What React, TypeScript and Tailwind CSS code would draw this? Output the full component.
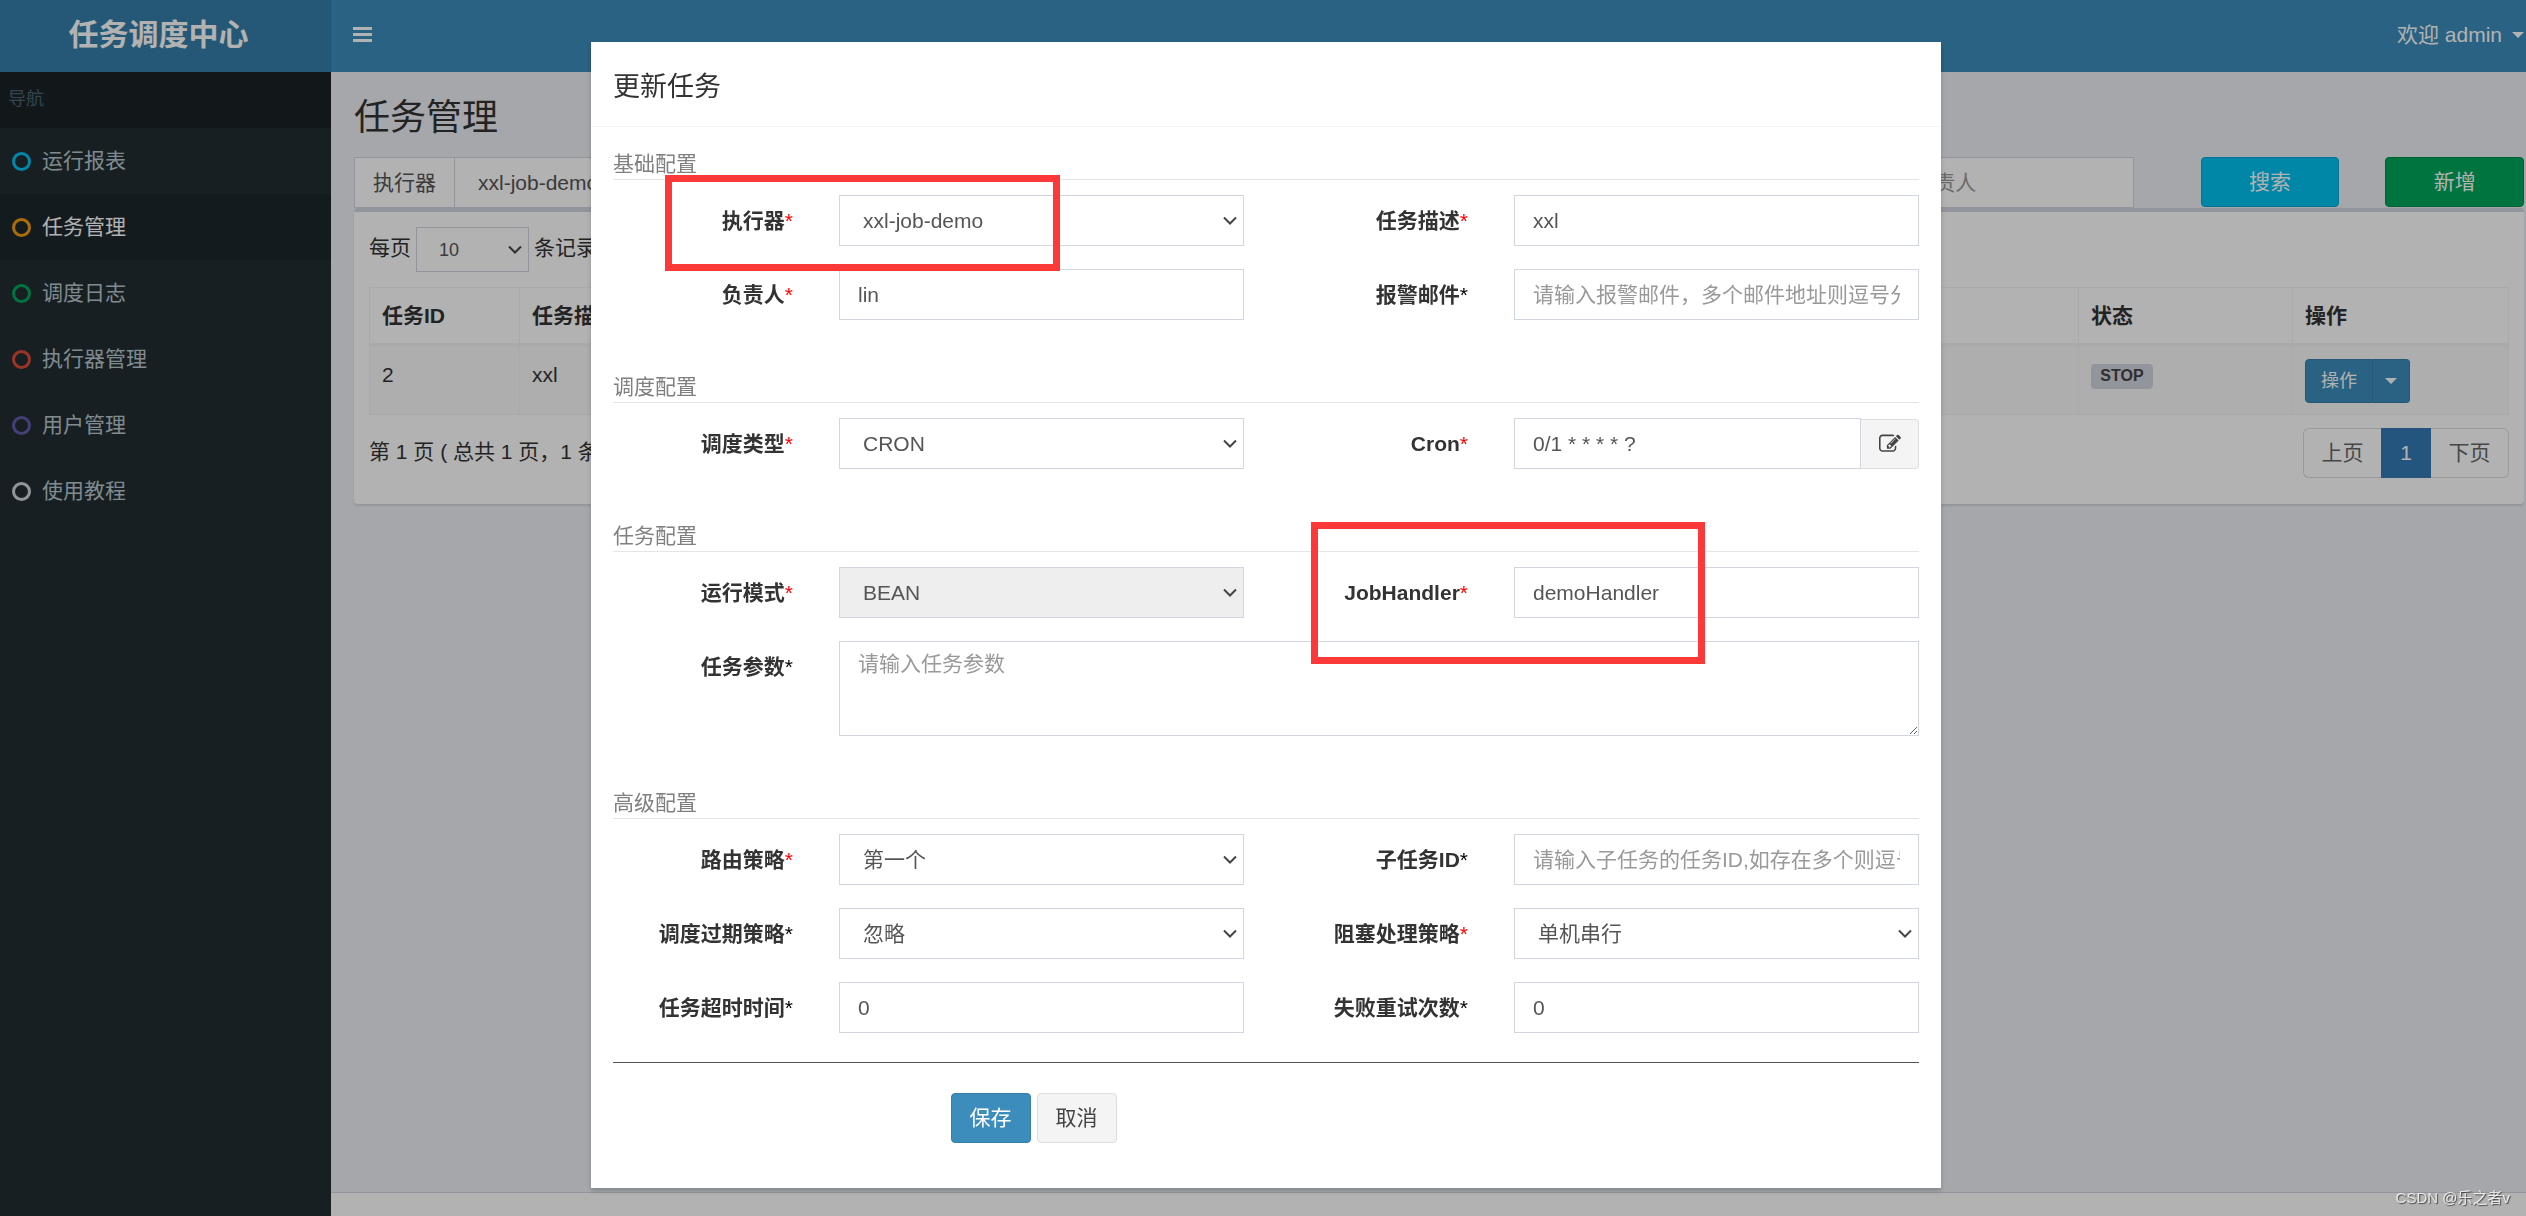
import type { ReactNode } from 'react'

const inputClass =
  'block w-full h-[51px] px-[18px] border border-[#d2d6de] bg-white text-[21px] text-[#555] placeholder-[#999] outline-none'

const menu = [
  { name: '运行报表', ring: 'border-[#00c0ef]' },
  { name: '任务管理', ring: 'border-[#f39c12]', active: true },
  { name: '调度日志', ring: 'border-[#00a65a]' },
  { name: '执行器管理', ring: 'border-[#dd4b39]' },
  { name: '用户管理', ring: 'border-[#605ca8]' },
  { name: '使用教程', ring: 'border-[#d2d6de]' },
]

function Chevron({ className }: { className: string }) {
  return (
    <svg
      className={`pointer-events-none absolute ${className}`}
      viewBox="0 0 14 9"
      fill="none"
      stroke="#444"
      strokeWidth={2}
    >
      <path d="M1 1.5l6 6 6-6" />
    </svg>
  )
}

function Caret() {
  return (
    <svg className="w-3 h-[6px]" viewBox="0 0 12 6" fill="currentColor">
      <path d="M0 0h12L6 6z" />
    </svg>
  )
}

function EditIcon() {
  return (
    <svg className="w-[22px] h-[22px]" viewBox="0 0 1792 1792" fill="currentColor">
      <path d="M888 1184l116-116-152-152-116 116v56h96v96h56zm440-720q-16-16-33 1l-350 350q-17 17-1 33t33-1l350-350q17-17 1-33zm80 594v190q0 119-84.5 203.5t-203.5 84.5h-832q-119 0-203.5-84.5t-84.5-203.5v-832q0-119 84.5-203.5t203.5-84.5h832q63 0 117 25 15 7 18 23 3 17-9 29l-49 49q-14 14-32 8-23-6-45-6h-832q-66 0-113 47t-47 113v832q0 66 47 113t113 47h832q66 0 113-47t47-113v-126q0-13 9-22l64-64q15-15 35-7t20 29zm-96-738l288 288-672 672h-288v-288zm444 132l-92 92-288-288 92-92q28-28 68-28t68 28l152 152q28 28 28 68t-28 68z" />
    </svg>
  )
}

function Section({ title, children }: { title: string; children: ReactNode }) {
  return (
    <section>
      <h5 className="h-[31px] mb-[15px] border-b border-[#e5e5e5] text-[21px] leading-[30px] text-[#808080]">
        {title}
      </h5>
      <div className="-mx-[22px] grid grid-cols-12 gap-y-[23px]">{children}</div>
    </section>
  )
}

type FieldProps = { id: string; label: string; required?: boolean; wide?: boolean; children: ReactNode }

function Field({ id, label, required, wide, children }: FieldProps) {
  return (
    <>
      <label
        htmlFor={id}
        className="col-span-2 pr-[23px] text-right text-[21px] leading-[51px] font-bold text-[#333] whitespace-nowrap"
      >
        {label}
        <span className={required ? 'font-normal text-[#f00]' : 'font-normal text-black'}>*</span>
      </label>
      <div className={wide ? 'col-span-10 pl-[23px] pr-[22px]' : 'col-span-4 pl-[23px] pr-[22px]'}>{children}</div>
    </>
  )
}

function Select({ id, value, disabled }: { id: string; value: string; disabled?: boolean }) {
  return (
    <div className="relative">
      <select
        id={id}
        disabled={disabled}
        className="block w-full h-[51px] pl-[23px] pr-8 appearance-none border border-[#d2d6de] bg-white text-[21px] text-[#555] opacity-100 disabled:bg-[#eee]"
      >
        <option>{value}</option>
      </select>
      <Chevron className="w-[14px] h-[9px] right-[7px] top-[21px]" />
    </div>
  )
}

function Sidebar() {
  return (
    <aside className="w-[331px] shrink-0 bg-[#222d32]">
      <div className="h-[56px] pl-2 bg-[#1a2226] text-lg leading-[54px] text-[#4b646f]">导航</div>
      <nav>
        {menu.map((item) => (
          <a
            key={item.name}
            href="#"
            className={`flex items-center gap-[11px] h-[66px] pl-3 text-[21px] ${
              item.active ? 'bg-[#1e282c] text-white' : 'text-[#b8c7ce]'
            }`}
          >
            <span className={`w-[19px] h-[19px] rounded-full border-3 ${item.ring}`} />
            {item.name}
          </a>
        ))}
      </nav>
    </aside>
  )
}

function Filters() {
  return (
    <div className="-mx-[23px] grid grid-cols-12">
      <div className="col-span-3 px-[23px] flex">
        <label
          htmlFor="group"
          className="h-[51px] px-[18px] border border-r-0 border-[#d2d6de] bg-white text-[21px] leading-[49px] text-[#555] whitespace-nowrap"
        >
          执行器
        </label>
        <div className="flex-1">
          <Select id="group" value="xxl-job-demo" />
        </div>
      </div>
      <div className="col-span-1 px-[23px]">
        <input aria-label="状态" className={inputClass} />
      </div>
      <div className="col-span-2 px-[23px]">
        <input aria-label="任务描述" className={inputClass} />
      </div>
      <div className="col-span-2 px-[23px]">
        <input aria-label="JobHandler" className={inputClass} />
      </div>
      <div className="col-span-2 pl-[23px] pr-[44px]">
        <input aria-label="负责人" placeholder="请输入负责人" className={inputClass} />
      </div>
      <div className="col-span-1 px-[23px]">
        <button className="w-full h-[50px] rounded-[4px] border border-[#00acd6] bg-[#00c0ef] text-[21px] text-white">
          搜索
        </button>
      </div>
      <div className="col-span-1 px-[23px]">
        <button className="w-full h-[50px] rounded-[4px] border border-[#008d4c] bg-[#00a65a] text-[21px] text-white">
          新增
        </button>
      </div>
    </div>
  )
}

function JobTable() {
  const cell = 'border border-[#f4f4f4] px-3 text-left'
  return (
    <div className="rounded-[4px] border-t-4 border-[#d2d6de] bg-white px-[15px] pt-[15px] pb-[26px] shadow-[0_2px_2px_rgba(0,0,0,0.1)] text-[21px] text-[#333]">
      <div className="flex items-center gap-[5px]">
        <label htmlFor="length" className="leading-[41px] self-start">
          每页
        </label>
        <div className="relative">
          <select
            id="length"
            className="block w-[113px] h-[45px] pl-[22px] appearance-none border border-[#d2d6de] bg-white text-lg text-[#555]"
          >
            <option>10</option>
          </select>
          <Chevron className="w-[14px] h-[9px] right-[7px] top-[18px]" />
        </div>
        <span className="leading-[41px] self-start">条记录</span>
      </div>
      <table className="w-full mt-[15px] border-collapse table-fixed">
        <thead>
          <tr className="h-[57px] border-b-4 border-[#f4f4f4]">
            <th className={`${cell} w-[150px]`}>任务ID</th>
            <th className={cell}>任务描述</th>
            <th className={`${cell} w-[214px]`}>状态</th>
            <th className={`${cell} w-[216px]`}>操作</th>
          </tr>
        </thead>
        <tbody>
          <tr className="h-[70px] bg-[#f9f9f9] align-top">
            <td className={`${cell} pt-3`}>2</td>
            <td className={`${cell} pt-3`}>xxl</td>
            <td className={`${cell} pt-[17px]`}>
              <span className="block w-[62px] h-[25px] rounded-[4px] bg-[#d2d6de] text-center text-base leading-[23px] font-bold text-[#444]">
                STOP
              </span>
            </td>
            <td className={`${cell} pt-3`}>
              <div className="flex h-[44px] text-lg text-white">
                <button className="w-[68px] rounded-l-[4px] border border-[#367fa9] bg-[#3c8dbc]">操作</button>
                <button
                  aria-label="更多操作"
                  className="w-[37px] flex items-center justify-center rounded-r-[4px] border border-l-0 border-[#367fa9] bg-[#3c8dbc]"
                >
                  <Caret />
                </button>
              </div>
            </td>
          </tr>
        </tbody>
      </table>
      <div className="mt-[13px] flex justify-between">
        <p className="leading-[48px]">第 1 页 ( 总共 1 页，1 条记录 )</p>
        <div className="flex h-[50px] text-[#666]">
          <button className="w-[78px] rounded-l-[6px] border border-r-0 border-[#ddd]">上页</button>
          <button className="w-[50px] bg-[#337ab7] text-white">1</button>
          <button className="w-[78px] rounded-r-[6px] border border-l-0 border-[#ddd]">下页</button>
        </div>
      </div>
    </div>
  )
}

function UpdateModal() {
  return (
    <div className="fixed inset-0 bg-black/30 pt-[42px] pl-[6px]">
      <form
        role="dialog"
        aria-label="更新任务"
        className="relative mx-auto max-w-[1350px] bg-white shadow-[0_3px_5px_rgba(0,0,0,0.2)]"
      >
        <h4 className="h-[85px] px-[22px] border-b border-[#f4f4f4] text-[27px] leading-[90px] text-[#333]">更新任务</h4>

        <div className="px-[22px] pt-[22px] pb-[45px]">
          <div className="space-y-[52px]">
            <Section title="基础配置">
              <Field id="jobGroup" label="执行器" required>
                <Select id="jobGroup" value="xxl-job-demo" />
              </Field>
              <Field id="jobDesc" label="任务描述" required>
                <input id="jobDesc" defaultValue="xxl" className={inputClass} />
              </Field>
              <Field id="author" label="负责人" required>
                <input id="author" defaultValue="lin" className={inputClass} />
              </Field>
              <Field id="alarmEmail" label="报警邮件">
                <input id="alarmEmail" placeholder="请输入报警邮件，多个邮件地址则逗号分隔" className={inputClass} />
              </Field>
            </Section>

            <Section title="调度配置">
              <Field id="scheduleType" label="调度类型" required>
                <Select id="scheduleType" value="CRON" />
              </Field>
              <Field id="cron" label="Cron" required>
                <div className="flex">
                  <input id="cron" defaultValue="0/1 * * * * ?" className={inputClass} />
                  <button
                    type="button"
                    aria-label="编辑 Cron"
                    className="w-[58px] h-[50px] mt-px shrink-0 flex items-center justify-center rounded-r-[4px] border border-l-0 border-[#ddd] bg-[#f4f4f4] text-[#444]"
                  >
                    <EditIcon />
                  </button>
                </div>
              </Field>
            </Section>

            <Section title="任务配置">
              <Field id="glueType" label="运行模式" required>
                <Select id="glueType" value="BEAN" disabled />
              </Field>
              <Field id="handler" label="JobHandler" required>
                <input id="handler" defaultValue="demoHandler" className={inputClass} />
              </Field>
              <Field id="param" label="任务参数" wide>
                <textarea
                  id="param"
                  placeholder="请输入任务参数"
                  className="block w-full h-[95px] px-[18px] py-[7px] border border-[#d2d6de] text-[21px] leading-[30px] text-[#555] placeholder-[#999]"
                />
              </Field>
            </Section>

            <Section title="高级配置">
              <Field id="route" label="路由策略" required>
                <Select id="route" value="第一个" />
              </Field>
              <Field id="childJob" label="子任务ID">
                <input id="childJob" placeholder="请输入子任务的任务ID,如存在多个则逗号分隔" className={inputClass} />
              </Field>
              <Field id="misfire" label="调度过期策略">
                <Select id="misfire" value="忽略" />
              </Field>
              <Field id="block" label="阻塞处理策略" required>
                <Select id="block" value="单机串行" />
              </Field>
              <Field id="timeout" label="任务超时时间">
                <input id="timeout" defaultValue="0" className={inputClass} />
              </Field>
              <Field id="retry" label="失败重试次数">
                <input id="retry" defaultValue="0" className={inputClass} />
              </Field>
            </Section>
          </div>

          <hr className="mt-[29px] mb-[30px] border-[#555]" />

          <div className="-mx-[22px] grid grid-cols-12">
            <div className="col-start-4 col-span-6 pl-[22px] flex gap-[6px] text-[21px]">
              <button type="button" className="w-20 h-[50px] rounded-[4px] border border-[#367fa9] bg-[#3c8dbc] text-white">
                保存
              </button>
              <button type="button" className="w-20 h-[50px] rounded-[4px] border border-[#ddd] bg-[#f4f4f4] text-[#444]">
                取消
              </button>
            </div>
          </div>
        </div>

        {/* Highlight marks over the form */}
        <div className="pointer-events-none absolute left-[74px] top-[133px] w-[395px] h-[96px] border-7 border-[#fc3838]" />
        <div className="pointer-events-none absolute left-[720px] top-[480px] w-[394px] h-[142px] border-7 border-[#fc3838]" />
      </form>
    </div>
  )
}

export default function App() {
  return (
    <div className="min-h-screen flex flex-col overflow-x-hidden bg-[#ecf0f5] font-['Liberation_Sans','Noto_Sans_CJK_SC',sans-serif]">
      <header className="flex h-[72px] bg-[#3c8dbc] text-white">
        <a
          href="#"
          className="w-[331px] shrink-0 pr-[14px] bg-[#367fa9] text-center text-[30px] leading-[69px] font-bold"
        >
          任务调度中心
        </a>
        <div className="flex-1 flex justify-between pl-[22px] pr-[2px] pb-[3px]">
          <button aria-label="切换导航" className="flex flex-col justify-center gap-[3px]">
            <span className="w-[19px] h-[3px] bg-white" />
            <span className="w-[19px] h-[3px] bg-white" />
            <span className="w-[19px] h-[3px] bg-white" />
          </button>
          <button className="flex items-center gap-[10px] text-[21px]">
            欢迎 admin
            <Caret />
          </button>
        </div>
      </header>

      <div className="flex-1 flex">
        <Sidebar />
        <div className="flex-1 min-w-0 flex flex-col">
          <main className="flex-1 pl-[23px] pr-[2px]">
            <h1 className="h-[85px] text-4xl leading-[92px] text-[#333]">任务管理</h1>
            <Filters />
            <JobTable />
          </main>
          <footer className="h-6 border-t border-[#d2d6de] bg-white" />
        </div>
      </div>

      <UpdateModal />
      <div className="fixed right-4 bottom-1 text-[15px] leading-7 text-white/80 [text-shadow:1px_1px_1px_rgba(0,0,0,0.6)]">
        CSDN @乐之者v
      </div>
    </div>
  )
}
